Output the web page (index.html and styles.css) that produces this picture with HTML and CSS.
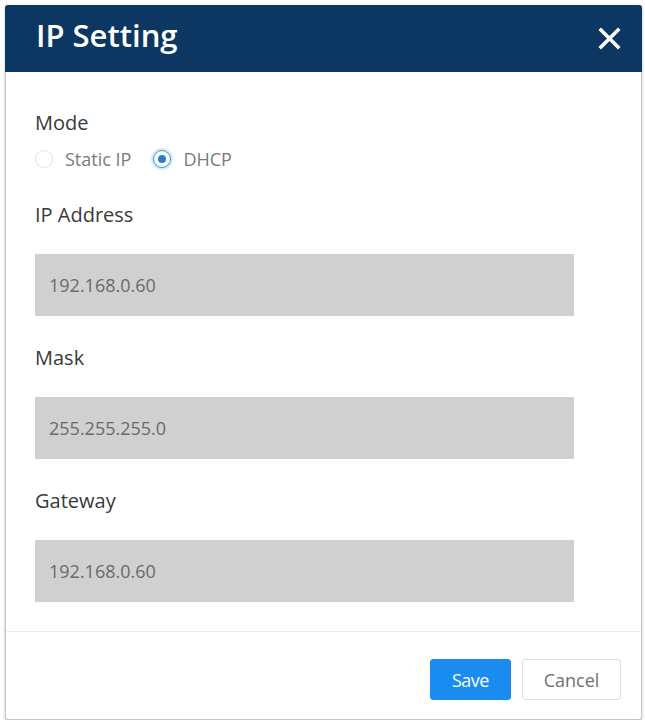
FILE: index.html
```html
<!DOCTYPE html>
<html lang="en">
<head>
<meta charset="utf-8">
<title>IP Setting</title>
<link rel="stylesheet" href="styles.css">
</head>
<body>
<div class="dialog">
  <div class="header">
    <div class="title">IP Setting</div>
    <div class="close" aria-label="Close">
      <svg width="23" height="23" viewBox="0 0 23 23"><path d="M3 3 L20 20 M20 3 L3 20" stroke="#fff" stroke-width="3.6" stroke-linecap="square" fill="none"/></svg>
    </div>
  </div>
  <div class="body">
    <div class="label">Mode</div>
    <div class="radios">
      <label class="radio"><span class="dot"></span><span class="rtext">Static IP</span></label>
      <label class="radio checked"><span class="dot"></span><span class="rtext">DHCP</span></label>
    </div>
    <div class="field first">
      <div class="label">IP Address</div>
      <div class="input">192.168.0.60</div>
    </div>
    <div class="field">
      <div class="label">Mask</div>
      <div class="input">255.255.255.0</div>
    </div>
    <div class="field">
      <div class="label">Gateway</div>
      <div class="input">192.168.0.60</div>
    </div>
  </div>
  <div class="footer">
    <button class="btn primary">Save</button>
    <button class="btn">Cancel</button>
  </div>
</div>
</body>
</html>
```
FILE: styles.css
```css
* { box-sizing: border-box; }
html, body { margin: 0; padding: 0; background: #fff; }
body { font-family: "Open Sans", "Noto Sans", sans-serif; }

.dialog {
  margin: 5px 0 0 5px;
  width: 637px;
  height: 715px;
  border: 1px solid #c4c4c4;
  border-top: none;
  border-radius: 3px;
  box-shadow: 0 1px 3px rgba(0,0,0,0.25);
  display: flex;
  flex-direction: column;
  background: #fff;
}

.header {
  height: 67px;
  margin: 0 -1px;
  background: #0c3763;
  border-radius: 3px 3px 0 0;
  display: flex;
  align-items: center;
  justify-content: space-between;
  padding: 0 21px 0 31px;
}
.title {
  color: #fff;
  font-size: 31px;
  line-height: 31px;
  font-weight: 600;
  padding-bottom: 7px;
}
.close { display: flex; width: 23px; height: 23px; }

.body {
  flex: 1;
  padding: 37px 67px 0 29px;
}
.label {
  font-size: 20px;
  line-height: 28px;
  color: #3a3a3a;
}
.radios {
  display: flex;
  align-items: center;
  margin-top: 10px;
  height: 24px;
}
.radio {
  display: flex;
  align-items: center;
  font-size: 18px;
  line-height: 24px;
  color: #7a7a7a;
  margin-right: 22px;
}
.dot {
  width: 18px;
  height: 18px;
  border-radius: 50%;
  border: 1px solid #e2e2e2;
  background: #fff;
  margin-right: 12px;
  position: relative;
}
.radio.checked .dot {
  border: 1.5px solid #3a96e0;
  box-shadow: 0 0 0 2px #d6ebfb;
}
.radio.checked .dot::after {
  content: "";
  position: absolute;
  left: 50%; top: 50%;
  width: 8px; height: 8px;
  margin: -4px 0 0 -4px;
  border-radius: 50%;
  background: #2a7fd0;
}

.field { margin-top: 28px; }
.field.first { margin-top: 30px; }
.field .label { margin-bottom: 25px; }
.input {
  height: 62px;
  background: #d0d0d0;
  color: #6a6a6a;
  font-size: 18px;
  line-height: 62px;
  padding-left: 14px;
}

.footer {
  border-top: 1px solid #ececec;
  height: 88px;
  display: flex;
  justify-content: flex-end;
  align-items: flex-start;
  padding: 27px 20px 0 0;
  gap: 11px;
}
.btn {
  font-family: "Open Sans", "Noto Sans", sans-serif;
  height: 41px;
  font-size: 18px;
  border-radius: 3px;
  border: 1px solid #dedede;
  background: #fff;
  color: #707070;
  width: 99px;
  padding: 0;
}
.btn.primary {
  width: 81px;
  background: #1a8cf0;
  border-color: #1a8cf0;
  color: #fff;
  letter-spacing: -0.5px;
}
```
